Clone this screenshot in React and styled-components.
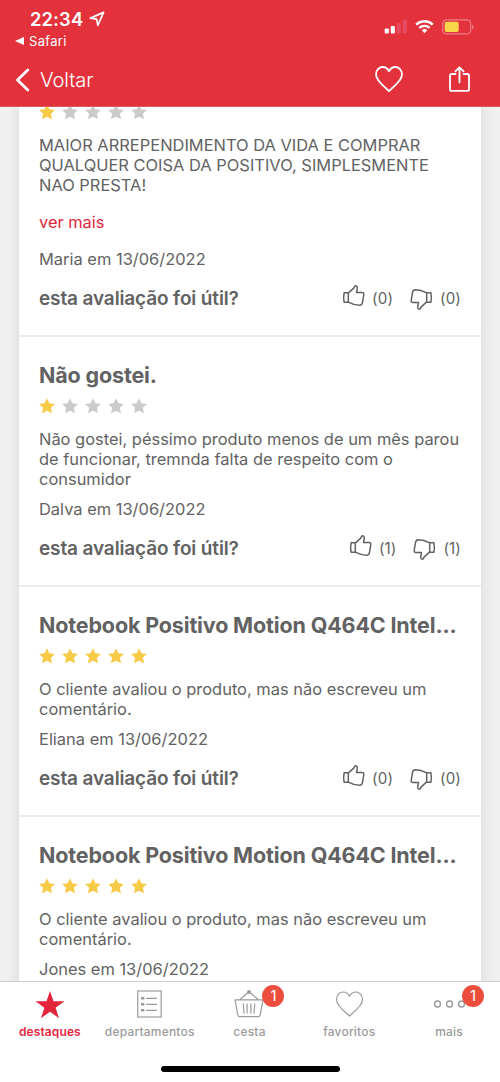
import styled, { createGlobalStyle, css } from "styled-components";

const GlobalStyle = createGlobalStyle`
  * {
    box-sizing: border-box;
  }
  body {
    margin: 0;
    font-family: Inter, "Liberation Sans", sans-serif;
    color: #626262;
    background-color: #f0f0f0;
  }
`;

const StScreen = styled.div`
  width: 500px;
  height: 1082px;
  display: flex;
  flex-direction: column;
  overflow: hidden;
`;

const StHeader = styled.header`
  flex: none;
  height: 107px;
  background-color: #e3323c;
  border-bottom: 1px solid #d95b62;
  color: white;
  display: flex;
  flex-direction: column;
`;

const StStatusBar = styled.div`
  height: 53px;
  padding: 9px 26px 0 15px;
  display: flex;
  justify-content: space-between;
`;

const StClock = styled.div`
  display: flex;
  align-items: center;
  gap: 6px;
  height: 20px;
  padding-left: 15px;
  font-size: 18.4px;
  font-weight: 600;
  letter-spacing: 0.1px;
`;

const StBackApp = styled.div`
  display: flex;
  align-items: center;
  gap: 5px;
  height: 16px;
  margin-top: 4px;
  font-size: 13px;
  letter-spacing: 0.3px;
`;

const StSignals = styled.div`
  display: flex;
  align-items: flex-start;
  gap: 8px;
  padding-top: 10px;
`;

const StNavBar = styled.div`
  flex: 1;
  display: flex;
  align-items: center;
  padding: 0 30px 0 15px;
`;

const StBack = styled.div`
  display: flex;
  align-items: center;
  gap: 10px;
  flex: 1;
  font-size: 20.2px;
  font-weight: 300;
  letter-spacing: -0.1px;
`;

const StActions = styled.div`
  display: flex;
  align-items: center;
  gap: 46px;
  padding-bottom: 2px;
`;

const StContent = styled.main`
  flex: 1;
  min-height: 0;
  overflow: hidden;
  padding: 0 19px;
`;

const StReviews = styled.div`
  background-color: white;
  box-shadow: 0 0 14px rgba(0, 0, 0, 0.1);
`;

const StReview = styled.article`
  padding: ${({ $cut }) => ($cut ? "0" : "24px")} 20px 23px;
  border-bottom: 2px solid #ededed;
`;

const StTitle = styled.h2`
  margin: 0 0 9px;
  font-size: 21.5px;
  font-weight: 700;
  line-height: 28px;
  letter-spacing: -0.15px;
  white-space: nowrap;
`;

const StStars = styled.div`
  display: flex;
  gap: 7px;
  height: 16px;
  margin-top: ${({ $cut }) => ($cut ? "-3px" : "0")};
`;

const StText = styled.p`
  margin: ${({ $top }) => $top}px 0 0;
  font-size: 16.45px;
  line-height: 20px;
  white-space: pre;
`;

const StLine = styled.span`
  display: block;
`;

const StMore = styled.a`
  display: block;
  margin: 17px 0;
  font-size: 16.4px;
  line-height: 20px;
  color: #e3263c;
`;

const StUseful = styled.div`
  display: flex;
  align-items: center;
  height: 28px;
  margin-top: 15px;
`;

const StQuestion = styled.strong`
  flex: 1;
  font-size: 19px;
  font-weight: 600;
  letter-spacing: -0.13px;
`;

const StVote = styled.div`
  display: flex;
  align-items: center;
  gap: 7px;
  margin-left: 17px;
  font-size: 15.2px;
  letter-spacing: 0.1px;
`;

const StThumb = styled.svg`
  width: 23px;
  height: 24px;
  margin: ${({ $down }) => ($down ? "2px 0 0" : "0 0 4px")};
  transform: ${({ $down }) => ($down ? "rotate(180deg)" : "none")};
`;

const StTabBar = styled.nav`
  flex: none;
  height: 101px;
  background-color: white;
  border-top: 1px solid #cfcfcf;
  display: flex;
  flex-direction: column;
  align-items: center;
`;

const StTabs = styled.div`
  width: 100%;
  height: 84px;
  padding-right: 1px;
  display: grid;
  grid-template-columns: repeat(5, 1fr);
`;

const StTab = styled.div`
  display: flex;
  flex-direction: column;
  align-items: center;
  padding-top: 6px;
  font-size: 12px;
  font-weight: 500;
  line-height: 16px;
  letter-spacing: ${({ $spacing }) => $spacing}px;
  color: #9b9b9b;
  ${({ $active }) =>
    $active &&
    css`
      color: #e3263c;
      font-weight: 600;
    `}
`;

const StTabIcon = styled.div`
  position: relative;
  width: 34px;
  height: 36px;
  padding-top: ${({ $top = 2 }) => $top}px;
  display: flex;
  align-items: flex-start;
  justify-content: center;
`;

const StBadge = styled.span`
  position: absolute;
  top: -3px;
  left: 30px;
  width: 22px;
  height: 22px;
  border-radius: 50%;
  background-color: #ec4e3d;
  color: white;
  font-size: 15px;
  font-weight: 400;
  line-height: 22px;
  text-align: center;
  letter-spacing: 0;
`;

const StHomeBar = styled.div`
  width: 179px;
  height: 6px;
  border-radius: 3px;
  background-color: black;
`;

const LocationIcon = () => (
  <svg width="16" height="16" viewBox="0 0 16 16" fill="none" stroke="white" strokeWidth="1.7" strokeLinejoin="round">
    <path d="M14.6 1.4 8.8 14.3 7.7 8.2 1.4 7.1Z" />
  </svg>
);

const SignalIcon = () => (
  <svg width="23" height="15" viewBox="0 0 23 15" fill="white">
    <rect x="0.7" y="9.5" width="4.2" height="5" rx="1" />
    <rect x="6.7" y="7" width="4.2" height="7.5" rx="1" />
    <rect x="12.7" y="4" width="4.2" height="10.5" rx="1" fill="#e74a61" />
    <rect x="18.7" y="0.5" width="4.2" height="14" rx="1" fill="#e74a61" />
  </svg>
);

const WifiIcon = () => (
  <svg width="19" height="15" viewBox="0 0 20 15" fill="none" stroke="white" strokeWidth="2.6">
    <path d="M1.3 5.6a12.4 12.4 0 0 1 17.4 0" />
    <path d="M4.6 9a7.8 7.8 0 0 1 10.8 0" />
    <path d="M7.1 11.5a4.2 4.2 0 0 1 5.8 0L10 14.7Z" fill="white" stroke="none" />
  </svg>
);

const BatteryIcon = () => (
  <svg width="32" height="16" viewBox="0 0 32 16">
    <rect x="0.7" y="0.9" width="28" height="14" rx="3.7" fill="none" stroke="#ee7d88" strokeWidth="1.2" />
    <rect x="2.7" y="2.8" width="14" height="10.2" rx="1.8" fill="#f8d64a" />
    <path d="M30.2 5.5q1.6.7 1.6 2.4t-1.6 2.4Z" fill="#ee7d88" />
  </svg>
);

const HeartIcon = ({ width, height, stroke }) => (
  <svg width={width} height={height} viewBox="0 0 28 26" fill="none" stroke="currentColor" strokeWidth={stroke} strokeLinejoin="round">
    <path d="M14 25C10 21.3 1 14.7 1 8.4 1 4.2 4 1 7.8 1c2.8 0 4.9 1.6 6.2 4.3C15.3 2.6 17.4 1 20.2 1 24 1 27 4.2 27 8.4 27 14.7 18 21.3 14 25Z" />
  </svg>
);

const ShareIcon = () => (
  <svg width="21" height="26" viewBox="0 0 21 26" fill="none" stroke="white" strokeWidth="1.8" strokeLinecap="round" strokeLinejoin="round">
    <path d="M6.500 8H2.700Q1 8 1 9.700V23.200q0 1.700 1.700 1.700h15.600q1.700 0 1.700-1.700V9.700Q20 8 18.300 8h-3.800M10.500 16.500V1.600M6.400 5.400 10.500 1.300l4.100 4.100" />
  </svg>
);

const Stars = ({ rating, cut }) => (
  <StStars $cut={cut}>
    {[1, 2, 3, 4, 5].map((n) => (
      <svg key={n} width="16" height="16" viewBox="0 0 16 16" fill={n <= rating ? "#f7ca48" : "#cbcbcb"}>
        <path d="M8 .3 10.400 5.300 15.900 6 11.900 9.800 13 15.200 8 12.700 3 15.200 4.100 9.800.1 6 5.600 5.300Z" />
      </svg>
    ))}
  </StStars>
);

const Thumb = ({ down }) => (
  <StThumb $down={down} viewBox="0 0 23 24" fill="none" stroke="#626262" strokeWidth="1.5" strokeLinejoin="round">
    <path d="M2.100 8.800H6.300V18.200H2.100Q1.200 13.500 2.100 8.800ZM6.300 9.100 12 3.900 12.600 2.400Q13.500 1.200 14.900 2.500 15.700 3.700 15.100 5.400L14.500 8.500H20Q22 8.600 21.800 10.600L20.600 17.800Q20.100 21.200 17.800 21.300 12 21.300 6.300 18.200" />
  </StThumb>
);

const ListIcon = () => (
  <svg width="25" height="28" viewBox="0 0 25 28" fill="none" stroke="#9b9b9b" strokeWidth="1.2">
    <rect x="0.8" y="1" width="23.4" height="26" />
    <path d="M9 8.3h11M9 14.3h11M9 20.3h11" />
    <path d="M4 8.3h3.4M4 14.3h3.4M4 20.3h3.4" strokeWidth="2.6" />
  </svg>
);

const BasketIcon = () => (
  <svg width="30" height="29" viewBox="0 0 30 29" fill="none" stroke="#9b9b9b" strokeWidth="1.2" strokeLinejoin="round">
    <path d="M1 9.800H29L26.200 24.800Q25.800 26.600 24 26.600H6Q4.200 26.600 3.800 24.800ZM6 9.500 14 2.500M24 9.500 16 2.500M9.300 13.500 10 23.500M13.100 13.500V23.500M16.900 13.500V23.500M20.700 13.500 20 23.500" />
    <circle cx="15" cy="2" r="1.3" fill="#9b9b9b" />
  </svg>
);

const DotsIcon = () => (
  <svg width="32" height="28" viewBox="0 0 32 28" fill="none" stroke="#9b9b9b" strokeWidth="1.4">
    <circle cx="4.500" cy="14" r="3" />
    <circle cx="16.500" cy="14" r="3" />
    <circle cx="28.500" cy="14" r="3" />
  </svg>
);

const reviews = [
  {
    cut: true,
    rating: 1,
    lines: [
      "MAIOR ARREPENDIMENTO DA VIDA E COMPRAR",
      "QUALQUER COISA DA POSITIVO, SIMPLESMENTE",
      "NAO PRESTA!",
    ],
    more: true,
    author: "Maria em 13/06/2022",
    votes: "0",
  },
  {
    title: "Não gostei.",
    rating: 1,
    lines: [
      "Não gostei, péssimo produto menos de um mês parou",
      "de funcionar, tremnda falta de respeito com o",
      "consumidor",
    ],
    author: "Dalva em 13/06/2022",
    votes: "1",
  },
  {
    title: "Notebook Positivo Motion Q464C Intel...",
    rating: 5,
    lines: ["O cliente avaliou o produto, mas não escreveu um", "comentário."],
    author: "Eliana em 13/06/2022",
    votes: "0",
  },
  {
    title: "Notebook Positivo Motion Q464C Intel...",
    rating: 5,
    lines: ["O cliente avaliou o produto, mas não escreveu um", "comentário."],
    author: "Jones em 13/06/2022",
  },
];

function Review({ review }) {
  return (
    <StReview $cut={review.cut}>
      {review.title && <StTitle>{review.title}</StTitle>}
      <Stars rating={review.rating} cut={review.cut} />
      <StText $top={15}>
        {review.lines.map((line) => (
          <StLine key={line}>{line}</StLine>
        ))}
      </StText>
      {review.more && <StMore>ver mais</StMore>}
      <StText $top={10}>{review.author}</StText>
      {review.votes && (
        <StUseful>
          <StQuestion>esta avaliação foi útil?</StQuestion>
          <StVote><Thumb />({review.votes})</StVote>
          <StVote><Thumb down />({review.votes})</StVote>
        </StUseful>
      )}
    </StReview>
  );
}

function App() {
  return (
    <>
      <GlobalStyle />
      <StScreen>
        <StHeader>
          <StStatusBar>
            <div>
              <StClock>22:34<LocationIcon /></StClock>
              <StBackApp>
                <svg width="9" height="8" viewBox="0 0 9 8" fill="white"><path d="M0 4 9 0V8Z" /></svg>
                Safari
              </StBackApp>
            </div>
            <StSignals>
              <SignalIcon />
              <WifiIcon />
              <BatteryIcon />
            </StSignals>
          </StStatusBar>
          <StNavBar>
            <StBack>
              <svg width="15" height="24" viewBox="0 0 15 24" fill="none" stroke="white" strokeWidth="2.8" strokeLinecap="round" strokeLinejoin="round"><path d="M12.800 2 2.500 12 12.800 22" /></svg>
              Voltar
            </StBack>
            <StActions>
              <HeartIcon width={28} height={26} stroke={1.8} />
              <ShareIcon />
            </StActions>
          </StNavBar>
        </StHeader>
        <StContent>
          <StReviews>
            {reviews.map((review) => (
              <Review key={review.author} review={review} />
            ))}
          </StReviews>
        </StContent>
        <StTabBar>
          <StTabs>
            <StTab $active $spacing={0.1}>
              <StTabIcon $top={0}><svg width="30" height="34" viewBox="0 0 30 34" fill="#e3263c"><path d="M15 3 18.500 13.200H29.500L20.600 19.800 24 30.200 15 23.800 6 30.200 9.400 19.800.5 13.200H11.500Z" /></svg></StTabIcon>
              destaques
            </StTab>
            <StTab $spacing={0.2}>
              <StTabIcon><ListIcon /></StTabIcon>
              departamentos
            </StTab>
            <StTab $spacing={0.2}>
              <StTabIcon><BasketIcon /><StBadge>1</StBadge></StTabIcon>
              cesta
            </StTab>
            <StTab $spacing={0.2}>
              <StTabIcon $top={3}><HeartIcon width={29} height={26} stroke={1.2} /></StTabIcon>
              favoritos
            </StTab>
            <StTab $spacing={0.2}>
              <StTabIcon><DotsIcon /><StBadge>1</StBadge></StTabIcon>
              mais
            </StTab>
          </StTabs>
          <StHomeBar />
        </StTabBar>
      </StScreen>
    </>
  );
}

export default App;
